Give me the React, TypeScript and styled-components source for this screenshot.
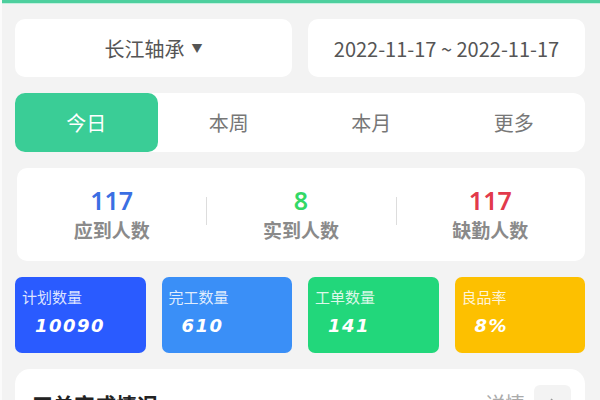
import React from "react"
import styled, { createGlobalStyle } from "styled-components"

const Global = createGlobalStyle`
  body {
    margin: 0;
    background: #f3f3f3;
    font-family: "Noto Sans CJK SC", "Noto Sans", sans-serif;
  }
`

const tabs = ["今日", "本周", "本月", "更多"]

const stats = [
  { value: "117", label: "应到人数", color: "#3b6fe3" },
  { value: "8", label: "实到人数", color: "#33d866" },
  { value: "117", label: "缺勤人数", color: "#e23a4b" },
]

const metrics = [
  { label: "计划数量", value: "10090", bg: "#2a5bff" },
  { label: "完工数量", value: "610", bg: "#3a8ff7" },
  { label: "工单数量", value: "141", bg: "#22d77b" },
  { label: "良品率", value: "8%", bg: "#fdc000" },
]

const App = () => {
  return (
    <Page>
      <Global />
      <TopBar />
      <Content>
        <Filters>
          <Picker>长江轴承<Caret>▼</Caret></Picker>
          <Picker>2022-11-17 ~ 2022-11-17</Picker>
        </Filters>

        <Tabs>
          {tabs.map((t, i) => (
            <Tab key={t} active={i === 0}>{t}</Tab>
          ))}
        </Tabs>

        <StatCard>
          {stats.map((s, i) => (
            <Stat key={s.label} divider={i > 0}>
              <StatNum color={s.color}>{s.value}</StatNum>
              <StatLabel>{s.label}</StatLabel>
            </Stat>
          ))}
        </StatCard>

        <Metrics>
          {metrics.map(m => (
            <Metric key={m.label} bg={m.bg}>
              <MetricLabel>{m.label}</MetricLabel>
              <MetricNum>{m.value}</MetricNum>
            </Metric>
          ))}
        </Metrics>

        <Panel>
          <PanelHead>
            <PanelTitle>工单完成情况</PanelTitle>
            <More>
              详情
              <Arrow>
                <svg width="14" height="14" viewBox="0 0 14 14">
                  <path d="M5 2 L10 7 L5 12" fill="none" stroke="#999" strokeWidth="1.5" />
                </svg>
              </Arrow>
            </More>
          </PanelHead>
        </Panel>
      </Content>
    </Page>
  )
}

export default App

const Page = styled.div`
width: 600px;
height: 400px;
overflow: hidden;
background: #f3f3f3;
border-left: 2px solid #fbfbfb;
box-sizing: border-box;
`

const TopBar = styled.div`
height: 3px;
background: #4dcf9e;
border-bottom: 1px solid #c4efdf;
`

const Content = styled.div`
padding: 15px 15px 0 13px;
display: flex;
flex-direction: column;
gap: 16px;
`

const Filters = styled.div`
display: flex;
gap: 16px;
`

const Picker = styled.div`
flex: 1;
height: 58px;
background: #fff;
border-radius: 10px;
display: flex;
align-items: center;
justify-content: center;
font-size: 20px;
color: #555;
`

const Caret = styled.span`
font-size: 11px;
margin-left: 7px;
color: #555;
`

const Tabs = styled.div`
height: 59px;
background: #fff;
border-radius: 12px;
display: grid;
grid-template-columns: repeat(4, 1fr);
`

const Tab = styled.div<{ active?: boolean }>`
display: flex;
align-items: center;
justify-content: center;
font-size: 20px;
border-radius: 10px;
color: ${p => (p.active ? "#fff" : "#777")};
background: ${p => (p.active ? "#3acd96" : "transparent")};
`

const StatCard = styled.div`
margin-left: 2px;
height: 93px;
background: #fff;
border-radius: 10px;
display: grid;
grid-template-columns: repeat(3, 1fr);
align-items: center;
`

const Stat = styled.div<{ divider?: boolean }>`
position: relative;
display: flex;
flex-direction: column;
align-items: center;
${p => p.divider && `
  &::before {
    content: "";
    position: absolute;
    left: 0;
    top: 12px;
    height: 28px;
    border-left: 1px solid #ddd;
  }
`}
`

const StatNum = styled.div<{ color: string }>`
font-family: "Noto Sans", sans-serif;
font-size: 25px;
font-weight: 600;
line-height: 30px;
color: ${p => p.color};
`

const StatLabel = styled.div`
font-size: 19px;
font-weight: 600;
color: #8a8a8a;
line-height: 30px;
`

const Metrics = styled.div`
display: grid;
grid-template-columns: repeat(4, 1fr);
gap: 16px;
`

const Metric = styled.div<{ bg: string }>`
height: 76px;
border-radius: 7px;
background: ${p => p.bg};
padding: 10px 7px;
box-sizing: border-box;
`

const MetricLabel = styled.div`
font-size: 15px;
color: rgba(255, 255, 255, 0.85);
line-height: 20px;
`

const MetricNum = styled.div`
margin: 8px 0 0 13px;
font-family: "DejaVu Sans", sans-serif;
font-size: 18px;
font-weight: 800;
font-style: italic;
letter-spacing: 1.5px;
color: #fff;
line-height: 22px;
`

const Panel = styled.div`
height: 80px;
background: #fff;
border-radius: 15px;
padding: 16px 14px 0 17px;
box-sizing: border-box;
`

const PanelHead = styled.div`
display: flex;
align-items: center;
justify-content: space-between;
`

const PanelTitle = styled.div`
font-size: 21px;
font-weight: 700;
color: #222;
`

const More = styled.div`
display: flex;
align-items: center;
gap: 9px;
font-size: 20px;
color: #aaa;
`

const Arrow = styled.div`
width: 37px;
height: 37px;
border-radius: 6px;
background: #f3f3f3;
display: flex;
align-items: center;
justify-content: center;
`
